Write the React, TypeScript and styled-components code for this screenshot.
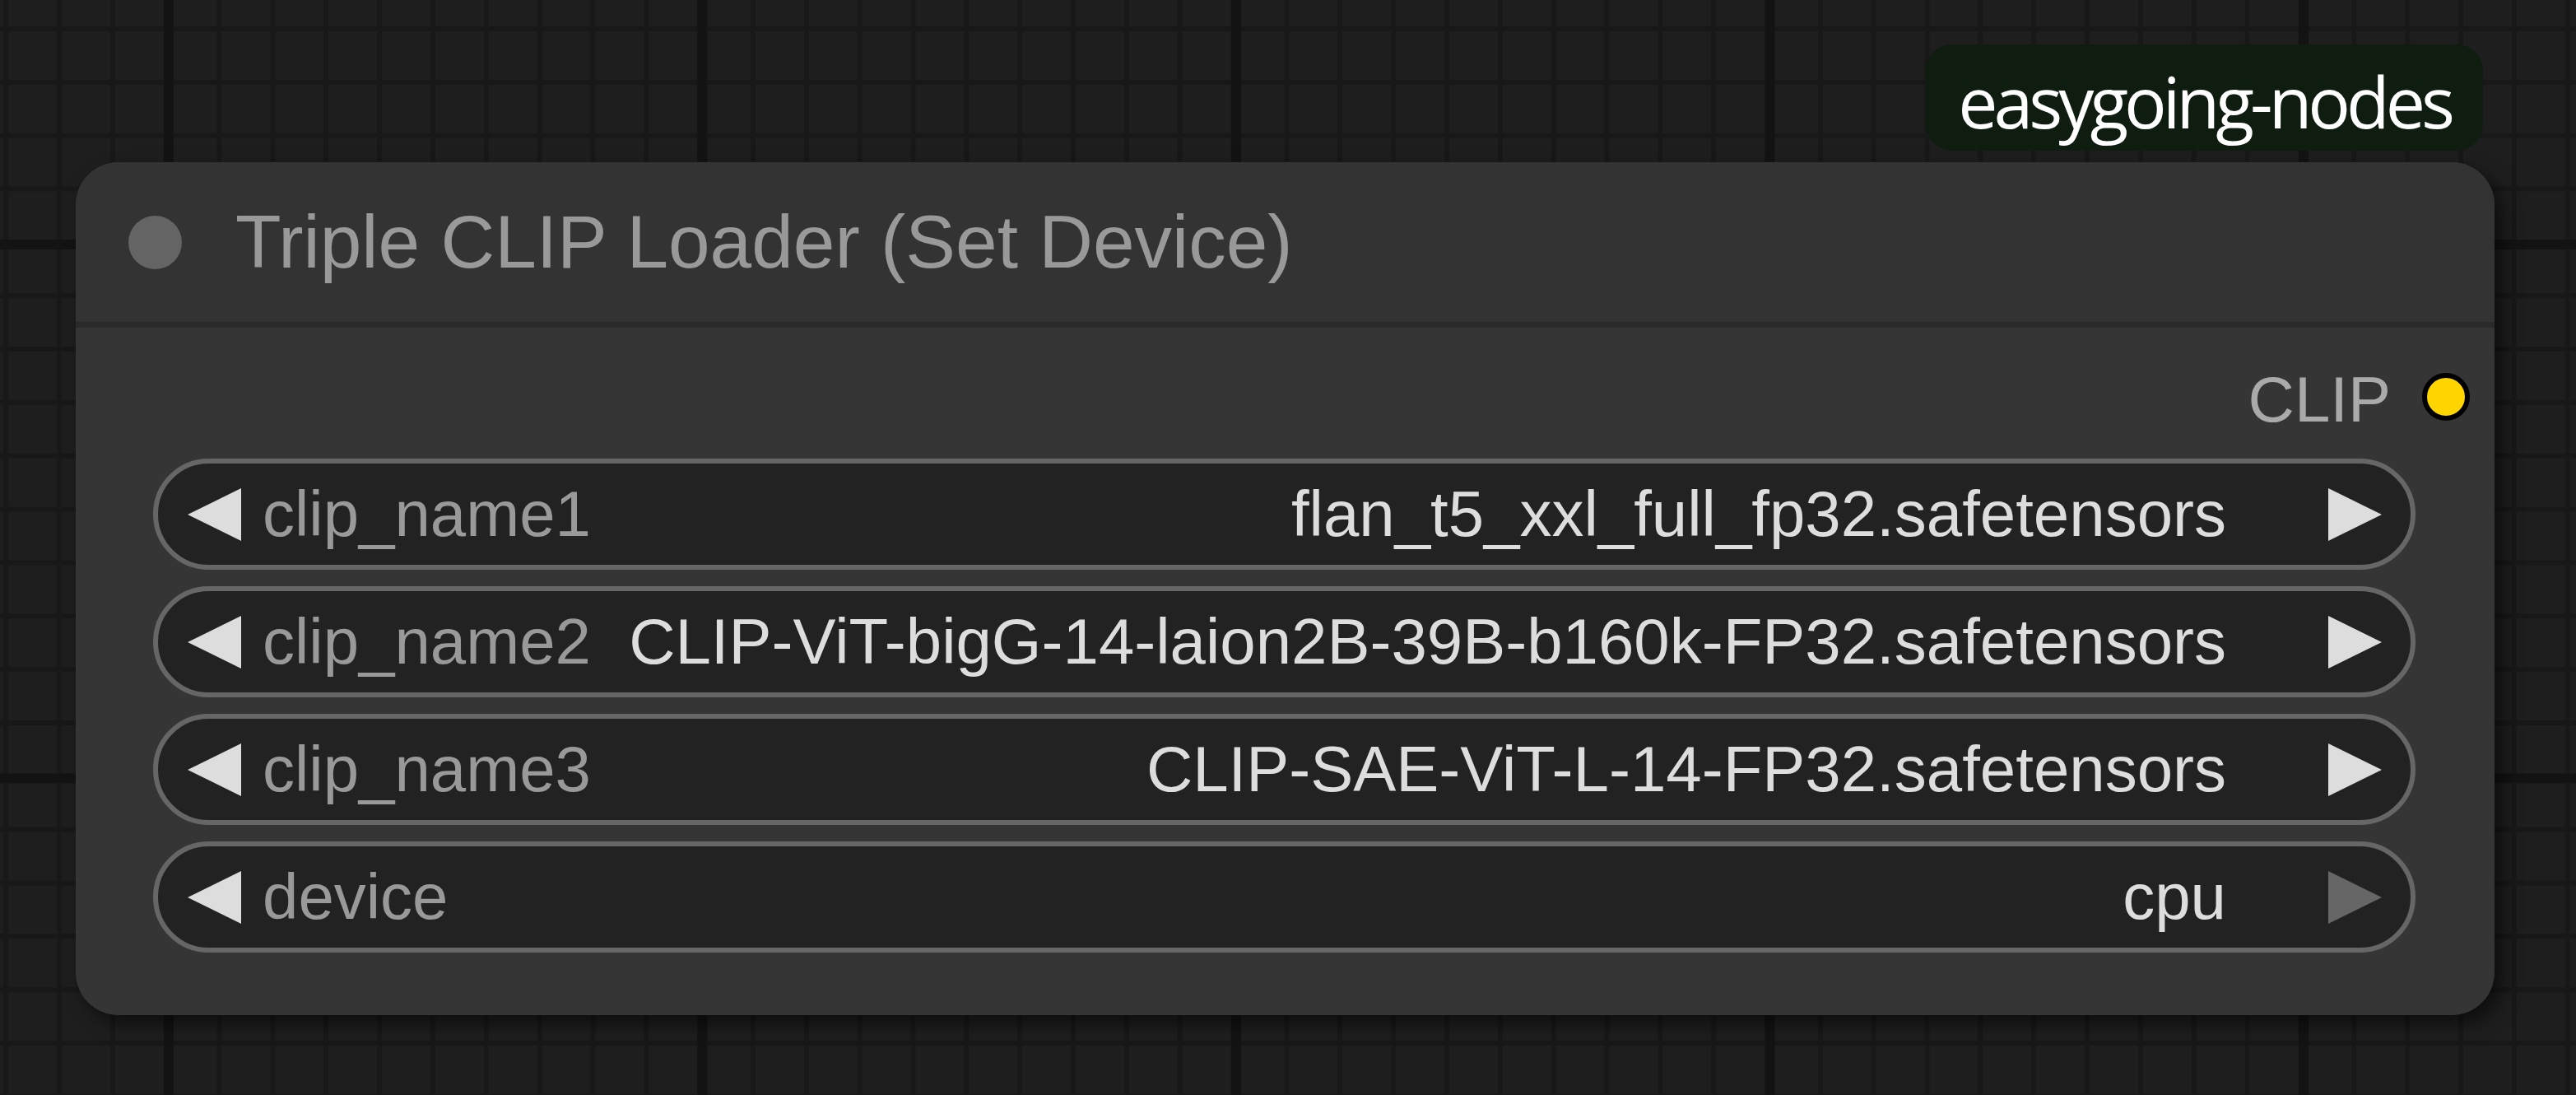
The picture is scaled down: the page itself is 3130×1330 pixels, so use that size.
import React from "react";
import styled, { createGlobalStyle } from "styled-components";

const colors = {
  canvas: "#1e1e1e",
  gridThin: "#181818",
  gridThick: "#131313",
  node: "#353535",
  title: "#333333",
  titleLine: "#2a2a2a",
  titleText: "#999999",
  slotText: "#aaaaaa",
  widgetBg: "#222222",
  widgetBorder: "#666666",
  widgetLabel: "#999999",
  widgetValue: "#dddddd",
  clip: "#ffd500",
  badge: "#0e1d10",
};

const GlobalStyle = createGlobalStyle`
  html, body {
    margin: 0;
    padding: 0;
    background: ${colors.canvas};
  }
  body {
    width: 3130px;
    height: 1330px;
    overflow: hidden;
  }
`;

const Canvas = styled.div`
  width: 3130px;
  height: 1330px;
  box-sizing: border-box;
  padding: 197px 0 0 92px;
  background-color: ${colors.canvas};
  background-image: linear-gradient(90deg, ${colors.gridThick} 12px, transparent 12px),
    linear-gradient(180deg, ${colors.gridThick} 12px, transparent 12px),
    linear-gradient(90deg, ${colors.gridThin} 6px, transparent 6px),
    linear-gradient(180deg, ${colors.gridThin} 6px, transparent 6px);
  background-size: 648.5px 648.5px, 648.5px 648.5px, 64.85px 64.85px, 64.85px 64.85px;
  background-position: 199px 0, 0 291px, 69px 0, 0 32px;
`;

const Node = styled.div`
  position: relative;
  width: 2939px;
  height: 1036px;
  border-radius: 52px;
  background: ${colors.node};
  box-shadow: 10px 10px 22px rgba(0, 0, 0, 0.55);
  display: flex;
  flex-direction: column;
  font-family: "Liberation Sans", Arial, sans-serif;
`;

const Badge = styled.div`
  position: absolute;
  right: 14px;
  bottom: calc(100% + 14px);
  height: 129px;
  box-sizing: border-box;
  padding: 8px 39px 0;
  border-radius: 32px;
  background: ${colors.badge};
  color: #ffffff;
  font-family: "Open Sans", "Noto Sans", sans-serif;
  font-size: 86px;
  letter-spacing: -5px;
  display: flex;
  align-items: center;
  white-space: nowrap;
`;

const TitleBar = styled.div`
  flex-shrink: 0;
  height: 194px;
  display: flex;
  align-items: center;
  gap: 65px;
  padding-left: 64px;
  background: ${colors.title};
  border-radius: 52px 52px 0 0;
  border-bottom: 7px solid ${colors.titleLine};
  color: ${colors.titleText};
  font-size: 91px;
  white-space: nowrap;
`;

const TitleDot = styled.div`
  width: 65px;
  height: 65px;
  border-radius: 50%;
  background: #646464;
  flex-shrink: 0;
`;

const Body = styled.div`
  display: flex;
  flex-direction: column;
  padding-top: 55px;
`;

const OutputRow = styled.div`
  height: 58px;
  display: flex;
  align-items: center;
  justify-content: flex-end;
  gap: 38px;
  padding-right: 30px;
  margin-bottom: 46px;
  color: ${colors.slotText};
  font-size: 78px;
`;

const SlotLabel = styled.span`
  padding-top: 6px;
`;

const SlotDot = styled.div<{ $color: string }>`
  width: 58px;
  height: 58px;
  box-sizing: border-box;
  border-radius: 50%;
  border: 6px solid #000000;
  background: ${(p) => p.$color};
`;

const WidgetList = styled.div`
  display: flex;
  flex-direction: column;
  gap: 20px;
  padding: 0 96px 0 94px;
`;

const Widget = styled.div`
  height: 135px;
  box-sizing: border-box;
  border: 6px solid ${colors.widgetBorder};
  border-radius: 68px;
  background: ${colors.widgetBg};
  display: flex;
  align-items: center;
  padding: 0 35px 0 36px;
  font-size: 78px;
`;

const Arrow = styled.svg<{ $dim?: boolean }>`
  width: 65px;
  height: 64px;
  flex-shrink: 0;
  fill: ${(p) => (p.$dim ? colors.widgetBorder : colors.widgetValue)};
`;

const Label = styled.span`
  flex-shrink: 0;
  margin-left: 26px;
  color: ${colors.widgetLabel};
  white-space: nowrap;
`;

const Value = styled.span`
  flex: 1;
  min-width: 0;
  margin: 0 124px 0 20px;
  text-align: right;
  color: ${colors.widgetValue};
  white-space: nowrap;
  overflow: hidden;
  text-overflow: ellipsis;
`;

const widgets = [
  { name: "clip_name1", value: "flan_t5_xxl_full_fp32.safetensors" },
  { name: "clip_name2", value: "CLIP-ViT-bigG-14-laion2B-39B-b160k-FP32.safetensors" },
  { name: "clip_name3", value: "CLIP-SAE-ViT-L-14-FP32.safetensors" },
  { name: "device", value: "cpu", last: true },
];

const ComboWidget: React.FC<{ name: string; value: string; last?: boolean }> = ({ name, value, last }) => (
  <Widget>
    <Arrow viewBox="0 0 65 64">
      <polygon points="65,0 65,64 0,32" />
    </Arrow>
    <Label>{name}</Label>
    <Value>{value}</Value>
    <Arrow viewBox="0 0 65 64" $dim={last}>
      <polygon points="0,0 0,64 65,32" />
    </Arrow>
  </Widget>
);

const App: React.FC = () => {
  return (
    <>
      <GlobalStyle />
      <Canvas>
        <Node>
          <Badge>easygoing-nodes</Badge>
          <TitleBar>
            <TitleDot />
            <span>Triple CLIP Loader (Set Device)</span>
          </TitleBar>
          <Body>
            <OutputRow>
              <SlotLabel>CLIP</SlotLabel>
              <SlotDot $color={colors.clip} />
            </OutputRow>
            <WidgetList>
              {widgets.map((w) => (
                <ComboWidget key={w.name} {...w} />
              ))}
            </WidgetList>
          </Body>
        </Node>
      </Canvas>
    </>
  );
};

export default App;
